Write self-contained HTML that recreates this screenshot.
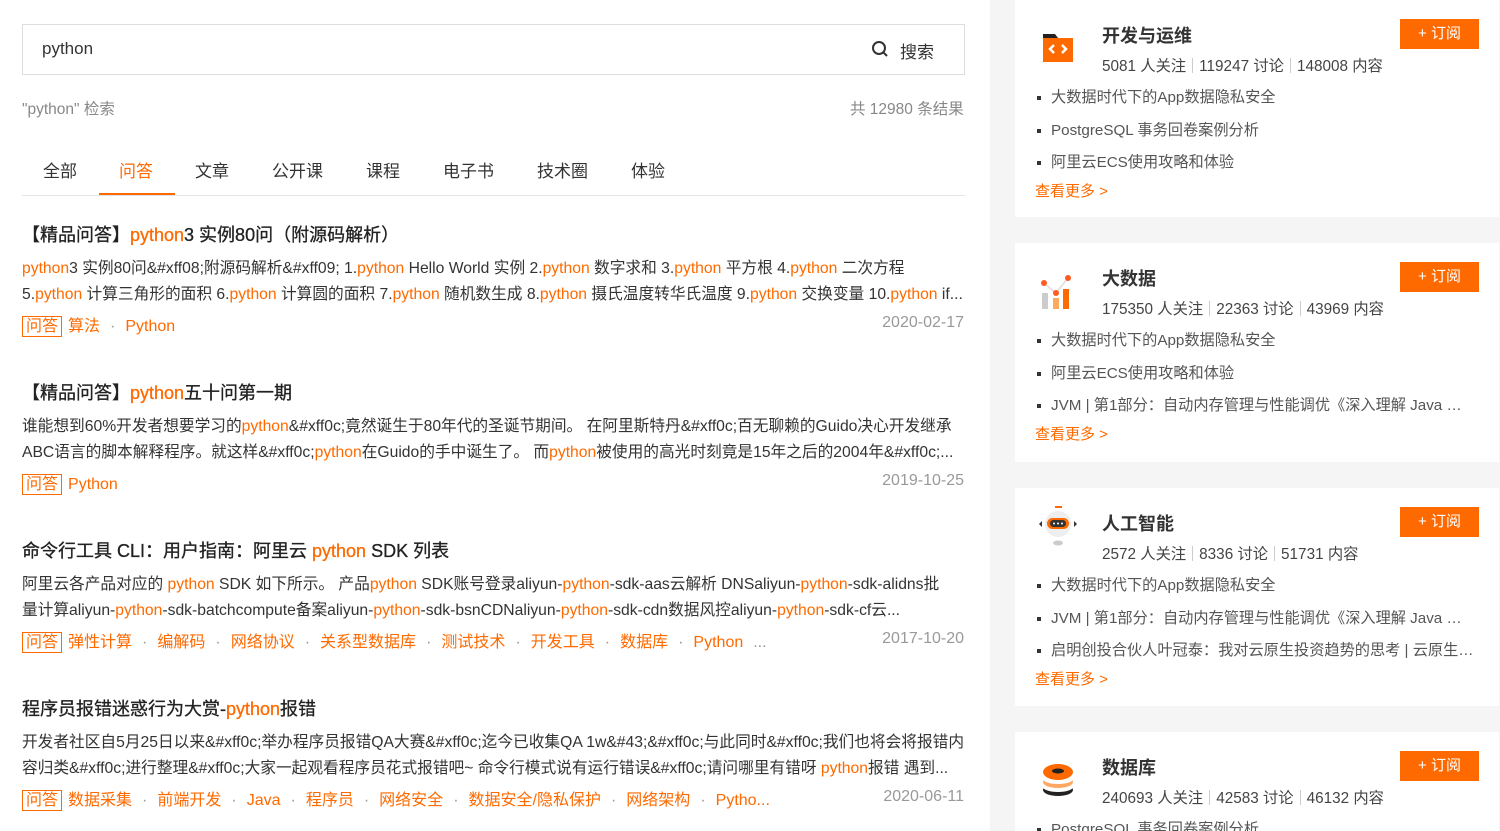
<!DOCTYPE html>
<html><head><meta charset="utf-8"><style>
*{margin:0;padding:0;box-sizing:border-box}
body{width:1500px;height:831px;overflow:hidden;background:#fff;font-family:"Liberation Sans","Noto Sans CJK SC",sans-serif;color:#333;position:relative}
.a{position:absolute;white-space:nowrap}
.o{color:#ff6a00}
.right{position:absolute;left:990px;top:0;width:510px;height:831px;background:#f5f5f5;overflow:hidden}
.card{position:absolute;left:25px;width:484px;background:#fff}
.card .t{position:absolute;left:87px;top:22px;font-size:18px;font-weight:bold;color:#333}
.card .s{position:absolute;left:87px;top:54px;font-size:15.3px;color:#444;white-space:nowrap}
.card .s i{display:inline-block;width:1px;height:15px;background:#ccc;margin:0 6px;vertical-align:-2px}
.card .btn{position:absolute;left:385px;top:19px;width:79px;height:30px;background:#ff6a00;color:#fff;font-size:15px;text-align:center;line-height:30px}
.card ul{position:absolute;left:20px;top:87px;list-style:none;width:440px}
.card li{font-size:15.2px;color:#555;height:32.5px;line-height:22px;white-space:nowrap;overflow:hidden;text-overflow:ellipsis;padding-left:16px;position:relative}
.card li:before{content:"";position:absolute;left:2px;top:9px;width:4px;height:4px;background:#333}
.card .m{position:absolute;left:20px;top:180px;font-size:15px;color:#ff6a00}
.card .ic{position:absolute;left:22px;top:24px}
.res .ti{font-size:18px;color:#222;position:absolute;left:22px;white-space:nowrap;-webkit-text-stroke:0.3px #222}
.d{position:absolute;left:22px;width:944px;font-size:15.7px;color:#333;line-height:25.5px;white-space:nowrap;overflow:hidden;text-overflow:ellipsis}
.tg{position:absolute;left:22px;font-size:16px;color:#ff6a00;white-space:nowrap}
.tg b{font-weight:normal;border:1px solid #ff6a00;padding:1px 3px;margin-right:6px}
.tg s{text-decoration:none;color:#999;margin:0 10px}
.dt{position:absolute;right:536px;font-size:16px;color:#999}
</style></head><body>
<div class="a" style="left:22px;top:24px;width:943px;height:51px;border:1px solid #ddd"></div>
<div class="a" style="left:42px;top:39px;font-size:17px;color:#333">python</div>
<svg class="a" style="left:871px;top:40px" width="18" height="18" viewBox="0 0 18 18"><circle cx="8" cy="8" r="6" fill="none" stroke="#333" stroke-width="2"/><path d="M12.5 12.5L16 16" stroke="#333" stroke-width="2"/></svg>
<div class="a" style="left:900px;top:38px;font-size:17px;color:#333">搜索</div>
<div class="a" style="left:22px;top:97px;font-size:15.5px;color:#888">"python" 检索</div>
<div class="a" style="left:850px;top:97px;font-size:15.5px;color:#888">共 12980 条结果</div>
<div class="a" style="top:157px;font-size:17px;color:#333;left:43px">全部</div>
<div class="a o" style="top:157px;font-size:17px;left:119px">问答</div>
<div class="a" style="top:157px;font-size:17px;left:195px">文章</div>
<div class="a" style="top:157px;font-size:17px;left:272px">公开课</div>
<div class="a" style="top:157px;font-size:17px;left:366px">课程</div>
<div class="a" style="top:157px;font-size:17px;left:443px">电子书</div>
<div class="a" style="top:157px;font-size:17px;left:537px">技术圈</div>
<div class="a" style="top:157px;font-size:17px;left:631px">体验</div>
<div class="a" style="left:22px;top:195px;width:943px;height:1px;background:#e5e5e5"></div>
<div class="a" style="left:99px;top:193px;width:76px;height:2px;background:#ff6a00"></div>

<div class="res">
<div class="ti" style="top:221px">【精品问答】<span class="o" style="-webkit-text-stroke:0.3px #ff6a00">python</span>3 实例80问（附源码解析）</div>
<div class="d" style="top:256px"><span class="o">python</span>3 实例80问&amp;#xff08;附源码解析&amp;#xff09; 1.<span class="o">python</span> Hello World 实例 2.<span class="o">python</span> 数字求和 3.<span class="o">python</span> 平方根 4.<span class="o">python</span> 二次方程<br>5.<span class="o">python</span> 计算三角形的面积 6.<span class="o">python</span> 计算圆的面积 7.<span class="o">python</span> 随机数生成 8.<span class="o">python</span> 摄氏温度转华氏温度 9.<span class="o">python</span> 交换变量 10.<span class="o">python</span> if...</div>
<div class="tg" style="top:312px"><b>问答</b>算法<s>·</s>Python</div>
<div class="dt" style="top:314px">2020-02-17</div>

<div class="ti" style="top:379px">【精品问答】<span class="o" style="-webkit-text-stroke:0.3px #ff6a00">python</span>五十问第一期</div>
<div class="d" style="top:414px">谁能想到60%开发者想要学习的<span class="o">python</span>&amp;#xff0c;竟然诞生于80年代的圣诞节期间。 在阿里斯特丹&amp;#xff0c;百无聊赖的Guido决心开发继承<br>ABC语言的脚本解释程序。就这样&amp;#xff0c;<span class="o">python</span>在Guido的手中诞生了。 而<span class="o">python</span>被使用的高光时刻竟是15年之后的2004年&amp;#xff0c;...</div>
<div class="tg" style="top:470px"><b>问答</b>Python</div>
<div class="dt" style="top:472px">2019-10-25</div>

<div class="ti" style="top:537px">命令行工具 CLI：用户指南：阿里云 <span class="o" style="-webkit-text-stroke:0.3px #ff6a00">python</span> SDK 列表</div>
<div class="d" style="top:572px">阿里云各产品对应的 <span class="o">python</span> SDK 如下所示。 产品<span class="o">python</span> SDK账号登录aliyun-<span class="o">python</span>-sdk-aas云解析 DNSaliyun-<span class="o">python</span>-sdk-alidns批<br>量计算aliyun-<span class="o">python</span>-sdk-batchcompute备案aliyun-<span class="o">python</span>-sdk-bsnCDNaliyun-<span class="o">python</span>-sdk-cdn数据风控aliyun-<span class="o">python</span>-sdk-cf云...</div>
<div class="tg" style="top:628px"><b>问答</b>弹性计算<s>·</s>编解码<s>·</s>网络协议<s>·</s>关系型数据库<s>·</s>测试技术<s>·</s>开发工具<s>·</s>数据库<s>·</s>Python<s>...</s></div>
<div class="dt" style="top:630px">2017-10-20</div>

<div class="ti" style="top:695px">程序员报错迷惑行为大赏-<span class="o" style="-webkit-text-stroke:0.3px #ff6a00">python</span>报错</div>
<div class="d" style="top:730px">开发者社区自5月25日以来&amp;#xff0c;举办程序员报错QA大赛&amp;#xff0c;迄今已收集QA 1w&amp;#43;&amp;#xff0c;与此同时&amp;#xff0c;我们也将会将报错内<br>容归类&amp;#xff0c;进行整理&amp;#xff0c;大家一起观看程序员花式报错吧~ 命令行模式说有运行错误&amp;#xff0c;请问哪里有错呀 <span class="o">python</span>报错 遇到...</div>
<div class="tg" style="top:786px"><b>问答</b>数据采集<s>·</s>前端开发<s>·</s>Java<s>·</s>程序员<s>·</s>网络安全<s>·</s>数据安全/隐私保护<s>·</s>网络架构<s>·</s>Pytho...</div>
<div class="dt" style="top:788px">2020-06-11</div>
</div>

<div class="right">
<div class="card" style="top:0;height:217px">
<svg class="ic" width="42" height="42" viewBox="0 0 42 42"><path d="M6 10h12l3 4H6z" fill="#222"/><rect x="6" y="14" width="30" height="24" fill="#ff6a00"/><path d="M17 21l-4 4 4 4M25 21l4 4-4 4" stroke="#fff" stroke-width="2.5" fill="none"/></svg>
<div class="t">开发与运维</div><div class="btn">+ 订阅</div>
<div class="s">5081 人关注<i></i>119247 讨论<i></i>148008 内容</div>
<ul><li>大数据时代下的App数据隐私安全</li><li>PostgreSQL 事务回卷案例分析</li><li>阿里云ECS使用攻略和体验</li></ul>
<div class="m">查看更多 &gt;</div></div>

<div class="card" style="top:243px;height:219px">
<svg class="ic" width="42" height="46" viewBox="0 0 42 46" style="top:28px"><rect x="5" y="22" width="6" height="16" fill="#ccc"/><rect x="16" y="27" width="6" height="11" fill="#ffa860"/><rect x="26" y="18" width="6" height="20" fill="#ff6a00"/><path d="M7 12l12 10 12-15" stroke="#ddd" stroke-width="1.5" fill="none"/><circle cx="7" cy="12" r="3" fill="#ff5a20"/><circle cx="19" cy="22" r="3" fill="#ff5a20"/><circle cx="31" cy="7" r="3" fill="#ff5a20"/></svg>
<div class="t">大数据</div><div class="btn">+ 订阅</div>
<div class="s">175350 人关注<i></i>22363 讨论<i></i>43969 内容</div>
<ul><li>大数据时代下的App数据隐私安全</li><li>阿里云ECS使用攻略和体验</li><li>JVM | 第1部分：自动内存管理与性能调优《深入理解 Java 虚拟机》</li></ul>
<div class="m">查看更多 &gt;</div></div>

<div class="card" style="top:488px;height:218px">
<svg class="ic" width="46" height="46" viewBox="0 0 46 46" style="left:20px;top:16px"><rect x="20" y="2" width="7" height="2" fill="#ff6a00"/><circle cx="23" cy="20" r="13" fill="#eee"/><rect x="12" y="14" width="22" height="11" rx="5.5" fill="#ff6a00"/><rect x="15" y="16" width="16" height="7" rx="3.5" fill="#333"/><circle cx="19" cy="19.5" r="1" fill="#fff"/><circle cx="23" cy="19.5" r="1" fill="#fff"/><circle cx="27" cy="19.5" r="1" fill="#fff"/><path d="M4 20l3-3v6zM42 20l-3-3v6z" fill="#333"/><ellipse cx="23" cy="39" rx="5" ry="2.5" fill="#ccc"/></svg>
<div class="t">人工智能</div><div class="btn">+ 订阅</div>
<div class="s">2572 人关注<i></i>8336 讨论<i></i>51731 内容</div>
<ul><li>大数据时代下的App数据隐私安全</li><li>JVM | 第1部分：自动内存管理与性能调优《深入理解 Java 虚拟机》</li><li>启明创投合伙人叶冠泰：我对云原生投资趋势的思考 | 云原生投资</li></ul>
<div class="m">查看更多 &gt;</div></div>

<div class="card" style="top:732px;height:120px">
<svg class="ic" width="42" height="46" viewBox="0 0 42 46" style="top:24px"><ellipse cx="21" cy="34" rx="15" ry="6" fill="#222"/><ellipse cx="21" cy="31" rx="15" ry="5" fill="#fff"/><ellipse cx="21" cy="26" rx="15" ry="6" fill="#ffa860"/><ellipse cx="21" cy="23" rx="15" ry="5" fill="#fff"/><ellipse cx="21" cy="16" rx="15" ry="8" fill="#ff6a00"/><ellipse cx="21" cy="15" rx="6" ry="2.5" fill="#222"/></svg>
<div class="t">数据库</div><div class="btn">+ 订阅</div>
<div class="s">240693 人关注<i></i>42583 讨论<i></i>46132 内容</div>
<ul><li>PostgreSQL 事务回卷案例分析</li></ul>
</div>
</div>
</body></html>
